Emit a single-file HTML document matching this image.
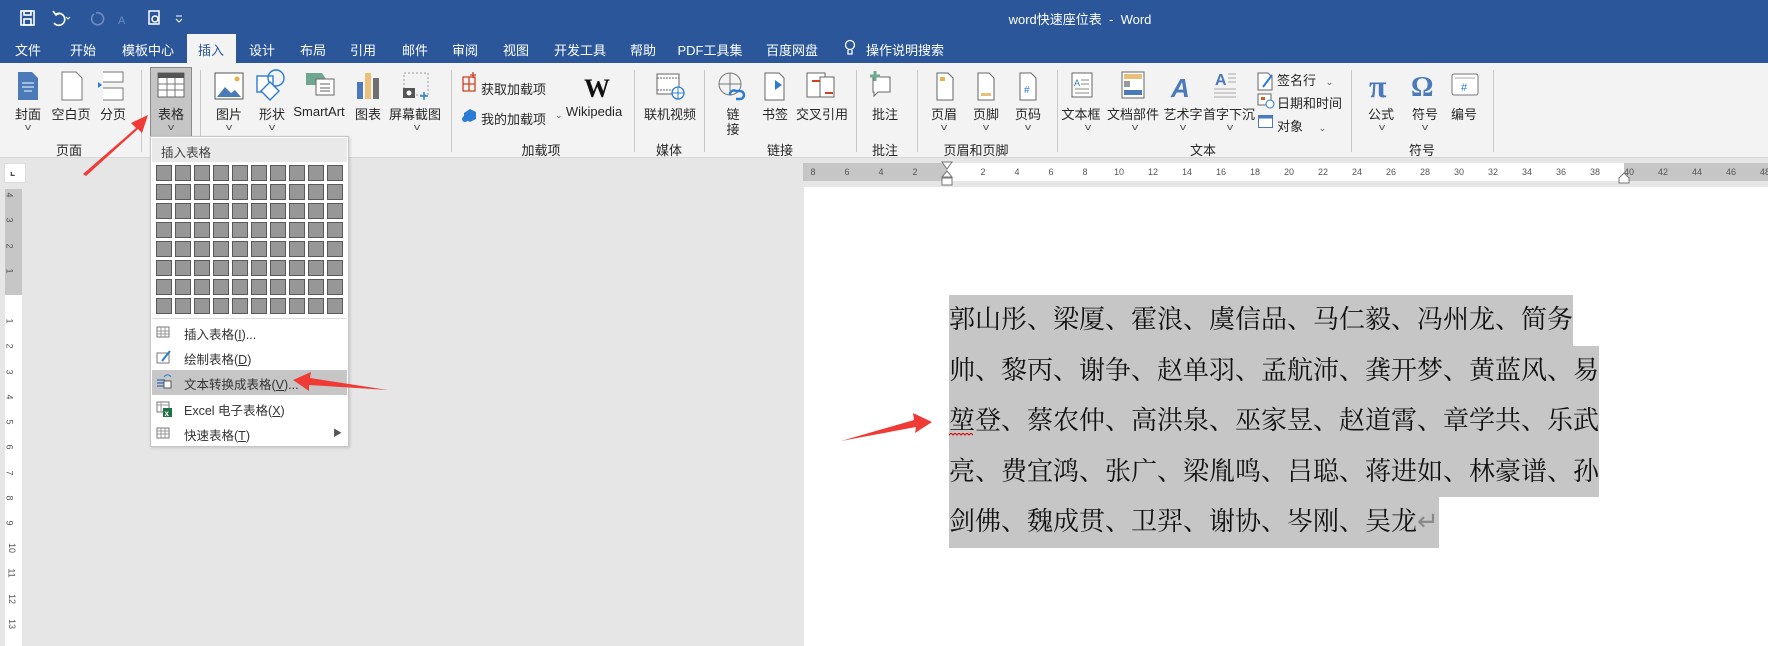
<!DOCTYPE html>
<html><head><meta charset="utf-8"><style>
*{margin:0;padding:0;box-sizing:border-box}
body{width:1768px;height:646px;overflow:hidden;position:relative;background:#e6e6e6;font-family:"Liberation Sans","Noto Sans CJK SC",sans-serif;font-size:13px;color:#262626}
.a{position:absolute}
.t{position:absolute;white-space:nowrap}
.c{transform:translateX(-50%)}
.tab{position:absolute;top:40px;color:#fff;font-size:13px;white-space:nowrap;transform:translateX(-50%)}
.lbl{position:absolute;top:104px;white-space:nowrap;transform:translateX(-50%);font-size:13px}
.dd{position:absolute;top:122px;font-size:9px;color:#555;transform:translateX(-50%) scaleX(1.4)}
.grp{position:absolute;top:140px;white-space:nowrap;transform:translateX(-50%);font-size:13px}
.sep{position:absolute;top:70px;width:1px;height:82px;background:#c8c8c8}
.cell{position:absolute;width:16px;height:16px;background:#979797;border:1px solid #5a5a5a}
.mi{position:absolute;left:184px;font-size:12.5px;color:#333;white-space:nowrap}
.doc{position:absolute;left:949px;font-family:"Liberation Serif","Noto Serif CJK SC",serif;font-size:26px;line-height:50.6px;background:#c6c6c6;color:#111;white-space:nowrap;height:50.6px}
.rn{position:absolute;font-size:9px;color:#555;top:167px;transform:translateX(-50%)}
.vn{position:absolute;left:7px;font-size:9px;color:#555;transform:rotate(90deg)}
</style></head><body>
<div class="a" style="left:0;top:0;width:1768px;height:63px;background:#2b579a"></div>
<svg class="a" style="left:18px;top:8px" width="170" height="20" viewBox="0 0 170 20">
<g fill="none" stroke="#fff" stroke-width="1.6">
<rect x="3" y="3" width="13" height="14"/><rect x="6" y="3" width="7" height="4"/><rect x="6" y="11" width="7" height="6"/>
<path d="M38 6 a6 6 0 1 1 -2 9"/><path d="M35 3 l3 4 l4 -2"/>
</g>
<path d="M48 9 l2 2 l2 -2" stroke="#fff" fill="none"/>
<path d="M78 5 a6 6 0 1 1 -2 1" stroke="#6f8cbf" fill="none" stroke-width="1.6"/>
<text x="100" y="16" fill="#6f8cbf" font-size="11">A</text>
<rect x="131" y="3" width="10" height="13" fill="none" stroke="#fff" stroke-width="1.5"/><circle cx="137" cy="11" r="3" fill="none" stroke="#fff" stroke-width="1.5"/>
<path d="M158 8 h6 M158 11 l3 3 l3 -3" stroke="#fff" fill="none"/>
</svg>
<div class="t c" style="left:1080px;top:9px;color:#fff;font-size:13px">word快速座位表 &nbsp;-&nbsp; Word</div>
<div class="a" style="left:187px;top:34px;width:49px;height:30px;background:#f3f3f3"></div>
<div class="tab" style="left:28px">文件</div>
<div class="tab" style="left:83px">开始</div>
<div class="tab" style="left:148px">模板中心</div>
<div class="tab" style="left:211px;color:#2b579a">插入</div>
<div class="tab" style="left:262px">设计</div>
<div class="tab" style="left:313px">布局</div>
<div class="tab" style="left:363px">引用</div>
<div class="tab" style="left:415px">邮件</div>
<div class="tab" style="left:465px">审阅</div>
<div class="tab" style="left:516px">视图</div>
<div class="tab" style="left:580px">开发工具</div>
<div class="tab" style="left:643px">帮助</div>
<div class="tab" style="left:710px">PDF工具集</div>
<div class="tab" style="left:792px">百度网盘</div>
<svg class="a" style="left:844px;top:39px" width="12" height="18"><circle cx="6" cy="6" r="4.5" fill="none" stroke="#fff" stroke-width="1.3"/><path d="M4 11 v4 h4 v-4" fill="none" stroke="#fff" stroke-width="1.3"/></svg>
<div class="tab" style="left:905px">操作说明搜索</div>
<div class="a" style="left:0;top:63px;width:1768px;height:95px;background:#f3f3f3;border-bottom:1px solid #d6d6d6"></div>
<div class="a" style="left:150px;top:67px;width:42px;height:70px;background:#c5c5c5;border:1px solid #8a8a8a"></div>
<div class="sep" style="left:141px"></div><div class="sep" style="left:200px"></div><div class="sep" style="left:451px"></div><div class="sep" style="left:634px"></div><div class="sep" style="left:704px"></div><div class="sep" style="left:856px"></div><div class="sep" style="left:917px"></div><div class="sep" style="left:1057px"></div><div class="sep" style="left:1351px"></div><div class="sep" style="left:1493px"></div>
<svg class="a" style="left:0;top:63px" width="1500" height="70" viewBox="0 63 1500 70">
<path d="M18 72 h14 l6 6 v22 h-20z" fill="#4a7ab8"/><path d="M22 83 h12 M22 87 h12 M24 91 h8" stroke="#fff"/>
<path d="M62 72 h14 l6 6 v22 h-20z" fill="#fff" stroke="#777"/>
<path d="M103 72 h20 v10 h-20 M103 88 h20 v12 h-20" fill="#fff" stroke="#777"/><path d="M98 82 l4 3 l-4 3z" fill="#2b7cd3"/>
<rect x="158" y="73" width="26" height="24" fill="#fff" stroke="#666"/><rect x="158" y="73" width="26" height="5" fill="#555"/>
<path d="M158 84 h26 M158 90 h26 M167 78 v19 M175 78 v19" stroke="#777"/>
<rect x="215" y="73" width="28" height="26" fill="#fff" stroke="#555"/><path d="M217 97 l8-10 l6 6 l4-3 l6 7z" fill="#4a7ab8"/><circle cx="237" cy="79" r="2.5" fill="#e8b04a"/>
<rect x="257" y="76" width="16" height="16" fill="#fff" stroke="#2b7cd3" stroke-width="1.4"/><circle cx="276" cy="78" r="8" fill="none" stroke="#2b7cd3" stroke-width="1.4"/><path d="M270 82 l9 9 l-9 9 l-9-9z" fill="#fff" stroke="#2b7cd3" stroke-width="1.4"/>
<path d="M306 73 h16 l4 6 l-4 6 h-16z" fill="#6fa890"/><rect x="316" y="79" width="18" height="16" fill="#fff" stroke="#666"/><path d="M320 84 h10 M320 88 h10 M320 91 h10" stroke="#666"/>
<rect x="357" y="82" width="6" height="17" fill="#4a7ab8"/><rect x="365" y="73" width="6" height="26" fill="#e8c07a"/><rect x="373" y="78" width="6" height="21" fill="#707070"/>
<rect x="404" y="73" width="24" height="22" fill="none" stroke="#999" stroke-dasharray="2 2"/><rect x="403" y="88" width="12" height="10" fill="#555"/><circle cx="409" cy="93" r="2.5" fill="#fff"/><path d="M420 96 h8 M424 92 v8" stroke="#2b7cd3" stroke-width="1.5"/>
<path d="M463 77 h12 v14 h-12z M463 84 h12 M469 77 v14 M473 72 v6 M470 75 h6" stroke="#d04020" fill="none" stroke-width="1.3"/>
<path d="M464 113 l6-4 l6 3 v7 l-6 3 l-6-3z" fill="#2b7cd3"/><circle cx="465" cy="119" r="3" fill="#2b7cd3"/>
<text x="584" y="97" font-family="Liberation Serif" font-size="26" font-weight="bold" fill="#111">W</text>
<rect x="657" y="74" width="22" height="20" fill="#fff" stroke="#666"/><path d="M657 78 h22 M657 90 h22" stroke="#666" stroke-dasharray="2 1"/><circle cx="678" cy="93" r="6" fill="#fff" stroke="#2b7cd3" stroke-width="1.3"/><path d="M672 93 h12 M678 87 v12" stroke="#2b7cd3"/>
<circle cx="730" cy="84" r="11" fill="none" stroke="#777"/><path d="M719 84 h22 M730 73 v22" stroke="#777"/><path d="M730 95 a4 4 0 0 1 6-4 h4 a4 4 0 0 1 0 8 h-4" stroke="#2b7cd3" stroke-width="2.5" fill="none"/>
<path d="M765 73 h14 l5 5 v22 h-19z" fill="#fff" stroke="#666"/><path d="M775 80 l7 5 l-7 5z" fill="#2b7cd3"/>
<rect x="807" y="73" width="18" height="24" fill="#fff" stroke="#666"/><rect x="820" y="77" width="14" height="20" fill="#fff" stroke="#666"/><rect x="812" y="80" width="8" height="2" fill="#d04020"/><rect x="825" y="92" width="8" height="2" fill="#d04020"/>
<path d="M873 77 h17 v15 h-12 l-4 4 v-4 h-1z" fill="#fff" stroke="#666"/><path d="M875 71 v10 M870 76 h10" stroke="#6fa890" stroke-width="3"/>
<path d="M937 73 h11 l5 5 v22 h-16z" fill="#fff" stroke="#666"/><rect x="940" y="77" width="5" height="4" fill="#e8b04a"/>
<path d="M978 73 h11 l5 5 v22 h-16z" fill="#fff" stroke="#666"/><rect x="981" y="93" width="10" height="3" fill="#e8c07a"/>
<path d="M1020 73 h11 l5 5 v22 h-16z" fill="#fff" stroke="#666"/><text x="1024" y="93" font-size="10" fill="#2b7cd3">#</text>
<rect x="1072" y="73" width="20" height="24" fill="#fff" stroke="#666"/><text x="1074" y="86" font-size="9" fill="#2b7cd3">A</text><path d="M1081 80 h8 M1081 84 h8 M1075 89 h14 M1075 93 h14" stroke="#888"/>
<rect x="1122" y="72" width="22" height="26" fill="#fff" stroke="#666"/><rect x="1124" y="74" width="18" height="5" fill="#e8c07a"/><rect x="1124" y="81" width="6" height="6" fill="#999"/><rect x="1124" y="90" width="18" height="5" fill="#4a7ab8"/>
<text x="1171" y="97" font-size="26" font-style="italic" font-weight="bold" fill="#4a7ab8">A</text>
<text x="1215" y="85" font-size="16" font-weight="bold" fill="#4a7ab8">A</text><path d="M1228 74 h8 M1228 78 h8 M1228 82 h8 M1214 89 h22 M1214 93 h22 M1214 97 h22" stroke="#aaa"/>
<path d="M1258 73 h10 l4 4 v13 h-14z" fill="#fff" stroke="#666"/><path d="M1263 87 l9-12" stroke="#2b7cd3" stroke-width="2"/>
<rect x="1258" y="94" width="13" height="11" fill="#fff" stroke="#666"/><rect x="1261" y="97" width="4" height="3" fill="#d06020"/><circle cx="1270" cy="104" r="4" fill="#fff" stroke="#2b7cd3"/>
<text x="1369" y="97" font-family="Liberation Serif" font-size="32" font-weight="bold" fill="#4a7ab8">π</text>
<text x="1411" y="96" font-family="Liberation Serif" font-size="28" font-weight="bold" fill="#4a7ab8">Ω</text>
<rect x="1452" y="74" width="26" height="21" rx="2" fill="#fff" stroke="#777"/><path d="M1455 78 h20" stroke="#aaa"/><text x="1461" y="91" font-size="11" fill="#2b7cd3">#</text>
</svg>
<div class="lbl" style="left:28px">封面</div><div class="lbl" style="left:71px">空白页</div><div class="lbl" style="left:113px">分页</div>
<div class="lbl" style="left:171px">表格</div>
<div class="lbl" style="left:229px">图片</div><div class="lbl" style="left:272px">形状</div><div class="lbl" style="left:319px">SmartArt</div><div class="lbl" style="left:368px">图表</div><div class="lbl" style="left:415px">屏幕截图</div>
<div class="t" style="left:481px;top:79px">获取加载项</div><div class="t" style="left:481px;top:109px">我的加载项</div><div class="t" style="left:555px;top:110px;font-size:9px;color:#555">⌄</div>
<div class="lbl" style="left:594px">Wikipedia</div>
<div class="lbl" style="left:670px">联机视频</div>
<div class="lbl" style="left:733px">链</div><div class="t c" style="left:733px;top:119px">接</div>
<div class="lbl" style="left:775px">书签</div><div class="lbl" style="left:822px">交叉引用</div>
<div class="lbl" style="left:885px">批注</div>
<div class="lbl" style="left:944px">页眉</div><div class="lbl" style="left:986px">页脚</div><div class="lbl" style="left:1028px">页码</div>
<div class="lbl" style="left:1081px">文本框</div><div class="lbl" style="left:1133px">文档部件</div><div class="lbl" style="left:1183px">艺术字</div><div class="lbl" style="left:1229px">首字下沉</div>
<div class="t" style="left:1277px;top:70px">签名行 <span style="font-size:9px;color:#555;margin-left:6px">⌄</span></div>
<div class="t" style="left:1277px;top:93px">日期和时间</div>
<div class="t" style="left:1277px;top:116px">对象 <span style="font-size:9px;color:#555;margin-left:12px">⌄</span></div>
<svg class="a" style="left:1258px;top:115px" width="16" height="14"><rect x="0.5" y="0.5" width="14" height="12" fill="#fff" stroke="#4a7ab8"/><rect x="0.5" y="0.5" width="14" height="3" fill="#4a7ab8"/></svg>
<div class="lbl" style="left:1381px">公式</div><div class="lbl" style="left:1425px">符号</div><div class="lbl" style="left:1464px">编号</div>
<div class="dd" style="left:28px">v</div><div class="dd" style="left:171px">v</div><div class="dd" style="left:229px">v</div><div class="dd" style="left:272px">v</div><div class="dd" style="left:417px">v</div>
<div class="dd" style="left:944px">v</div><div class="dd" style="left:986px">v</div><div class="dd" style="left:1028px">v</div><div class="dd" style="left:1088px">v</div><div class="dd" style="left:1135px">v</div><div class="dd" style="left:1183px">v</div><div class="dd" style="left:1230px">v</div><div class="dd" style="left:1382px">v</div><div class="dd" style="left:1425px">v</div>
<div class="grp" style="left:69px">页面</div><div class="grp" style="left:541px">加载项</div><div class="grp" style="left:669px">媒体</div><div class="grp" style="left:780px">链接</div><div class="grp" style="left:885px">批注</div><div class="grp" style="left:976px">页眉和页脚</div><div class="grp" style="left:1203px">文本</div><div class="grp" style="left:1422px">符号</div>
<div class="a" style="left:4px;top:163px;width:22px;height:20px;background:#fff;border:1px solid #ddd"></div>
<div class="t" style="left:10px;top:165px;font-size:11px;font-weight:bold;color:#444">⌞</div>
<div class="a" style="left:5px;top:189px;width:17px;height:106px;background:#c6c6c6"></div>
<div class="a" style="left:5px;top:295px;width:17px;height:351px;background:#fff"></div>
<div class="vn" style="top:190px">4</div><div class="vn" style="top:215px">3</div><div class="vn" style="top:241px">2</div><div class="vn" style="top:266px">1</div>
<div class="vn" style="top:316px">1</div><div class="vn" style="top:341px">2</div><div class="vn" style="top:367px">3</div><div class="vn" style="top:392px">4</div><div class="vn" style="top:417px">5</div><div class="vn" style="top:442px">6</div><div class="vn" style="top:468px">7</div><div class="vn" style="top:493px">8</div><div class="vn" style="top:518px">9</div><div class="vn" style="top:543px">10</div><div class="vn" style="top:568px">11</div><div class="vn" style="top:594px">12</div><div class="vn" style="top:619px">13</div>
<div class="a" style="left:803px;top:163px;width:965px;height:18px;background:#c6c6c6"></div>
<div class="a" style="left:947px;top:163px;width:677px;height:18px;background:#fff"></div>
<div class="rn" style="left:813px">8</div><div class="rn" style="left:847px">6</div><div class="rn" style="left:881px">4</div><div class="rn" style="left:915px">2</div>
<div class="rn" style="left:983px">2</div><div class="rn" style="left:1017px">4</div><div class="rn" style="left:1051px">6</div><div class="rn" style="left:1085px">8</div><div class="rn" style="left:1119px">10</div><div class="rn" style="left:1153px">12</div><div class="rn" style="left:1187px">14</div><div class="rn" style="left:1221px">16</div><div class="rn" style="left:1255px">18</div><div class="rn" style="left:1289px">20</div><div class="rn" style="left:1323px">22</div><div class="rn" style="left:1357px">24</div><div class="rn" style="left:1391px">26</div><div class="rn" style="left:1425px">28</div><div class="rn" style="left:1459px">30</div><div class="rn" style="left:1493px">32</div><div class="rn" style="left:1527px">34</div><div class="rn" style="left:1561px">36</div><div class="rn" style="left:1595px">38</div><div class="rn" style="left:1629px">40</div><div class="rn" style="left:1663px">42</div><div class="rn" style="left:1697px">44</div><div class="rn" style="left:1731px">46</div><div class="rn" style="left:1765px">48</div>
<svg class="a" style="left:940px;top:161px" width="14" height="28"><path d="M2 1 h10 l-5 7z M7 10 l-5 6 h10z" fill="#fff" stroke="#777"/><rect x="2" y="17" width="10" height="7" fill="#fff" stroke="#777"/></svg>
<svg class="a" style="left:1617px;top:172px" width="14" height="12"><path d="M7 1 l5 5 v5 h-10 v-5z" fill="#fff" stroke="#777"/></svg>
<div class="a" style="left:804px;top:187px;width:964px;height:459px;background:#fff"></div>
<div class="doc" style="top:295px">郭山彤、梁厦、霍浪、虞信品、马仁毅、冯州龙、简务</div>
<div class="doc" style="top:345.6px">帅、黎丙、谢争、赵单羽、孟航沛、龚开梦、黄蓝风、易</div>
<div class="doc" style="top:396.2px">堃登、蔡农仲、高洪泉、巫家昱、赵道霄、章学共、乐武</div>
<div class="doc" style="top:446.8px">亮、费宜鸿、张广、梁胤鸣、吕聪、蒋进如、林豪谱、孙</div>
<div class="doc" style="top:497.4px">剑佛、魏成贯、卫羿、谢协、岑刚、吴龙<span style="color:#888">↵</span></div>
<svg class="a" style="left:949px;top:433px" width="26" height="4"><path d="M0 2 l2-2 l2 2 l2-2 l2 2 l2-2 l2 2 l2-2 l2 2 l2-2 l2 2 l2-2 l2 2" stroke="#d00" fill="none"/></svg>
<div class="a" style="left:150px;top:136px;width:199px;height:311px;background:#fff;border:1px solid #c6c6c6;box-shadow:1px 1px 3px rgba(0,0,0,.15)"></div>
<div class="a" style="left:152px;top:138px;width:195px;height:24px;background:#e9e9e9"></div>
<div class="t" style="left:161px;top:142px;font-size:12.5px;color:#444">插入表格</div>
<div id="grid"></div>
<div class="a" style="left:152px;top:318px;width:195px;height:1px;background:#ddd"></div>
<div class="a" style="left:152px;top:370px;width:195px;height:25px;background:#c6c6c6"></div>
<div class="mi" style="top:324px">插入表格(<u>I</u>)...</div>
<div class="mi" style="top:349px">绘制表格(<u>D</u>)</div>
<div class="mi" style="top:374px">文本转换成表格(<u>V</u>)...</div>
<div class="mi" style="top:400px">Excel 电子表格(<u>X</u>)</div>
<div class="mi" style="top:425px">快速表格(<u>T</u>)</div>
<div class="t" style="left:333px;top:426px;font-size:9px;color:#555">▶</div>
<svg class="a" style="left:156px;top:325px" width="20" height="120">
<g fill="#fff" stroke="#777"><rect x="1" y="2" width="12" height="10"/><rect x="1" y="28" width="12" height="10"/><rect x="1" y="103" width="12" height="10"/><rect x="1" y="77" width="12" height="10"/></g>
<path d="M1 6 h12 M1 9 h12 M5 2 v10 M9 2 v10 M1 106 h12 M1 109 h12 M5 103 v10 M9 103 v10 M1 80 h12 M5 77 v10" stroke="#999"/>
<path d="M6 36 l8-10" stroke="#2b7cd3" stroke-width="2"/>
<path d="M1 55 h8 M1 58 h8 M1 61 h8" stroke="#4a7ab8" stroke-width="1.5"/><rect x="8" y="56" width="7" height="7" fill="#fff" stroke="#555"/><path d="M8 52 a4 4 0 0 1 7 0" stroke="#2b7cd3" fill="none"/>
<rect x="7" y="83" width="9" height="9" fill="#1e7145"/><text x="8.5" y="91" font-size="8" fill="#fff" font-weight="bold">x</text>
</svg>
<svg class="a" style="left:0;top:0" width="1768" height="646">
<g fill="#f03a35">
<path d="M83 174 L136 128 L131 123 L148 115 L142 133 L138 129 L86 176z"/>
<path d="M388 390 L310 378 L311 372 L293 380 L309 391 L309 385z"/>
<path d="M841 441 L916 427 L915 433 L932 422 L913 413 L914 420z"/>
</g>
</svg>
<script>
var g=document.getElementById('grid'),h='';
for(var r=0;r<8;r++)for(var c=0;c<10;c++)h+='<div class="cell" style="left:'+(156+c*19)+'px;top:'+(165+r*19)+'px"></div>';
g.innerHTML=h;
</script>
</body></html>
